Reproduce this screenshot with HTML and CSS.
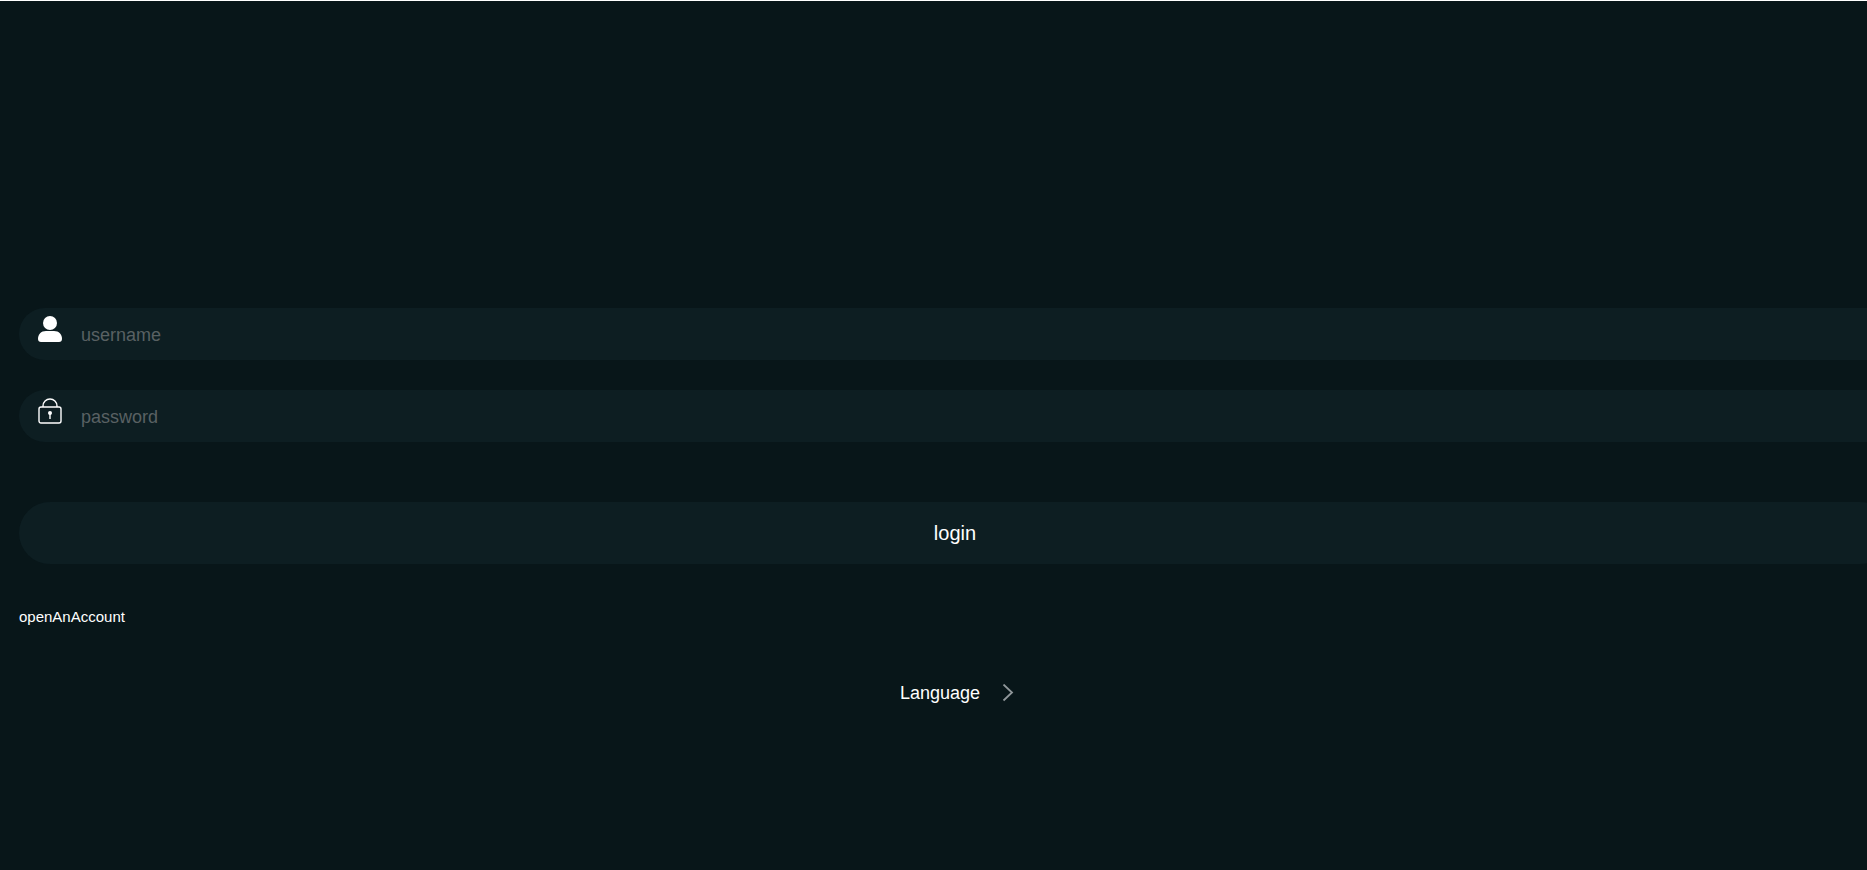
FILE: index.html
```html
<!DOCTYPE html>
<html lang="en">
<head>
    <meta charset="UTF-8">
    <meta name="viewport" content="width=device-width, initial-scale=1.0">
    <title>login</title>
    <link rel="stylesheet" href="styles.css">
</head>
<body>

    <main class="login-page">
        <form class="login-form">
            <div class="field">
                <label class="field-icon" for="username" aria-label="username">
                    <svg width="24" height="26" viewBox="0 0 24 26" fill="#fff">
                        <circle cx="12" cy="7" r="7"/>
                        <path d="M8 15h8c5 0 8 3.500 8 8 0 2-1.200 3-3 3H3c-1.800 0-3-1-3-3 0-4.500 3-8 8-8z"/>
                    </svg>
                </label>
                <input type="text" id="username" placeholder="username">
            </div>

            <div class="field">
                <label class="field-icon" for="password" aria-label="password">
                    <svg width="24" height="26" viewBox="0 0 24 26" fill="none" stroke="#fff" stroke-width="1.4">
                        <path d="M5 9V8a7 7 0 0 1 14 0v1"/>
                        <rect x="1" y="9" width="22" height="16" rx="2"/>
                        <circle cx="12" cy="15" r="2" fill="#fff" stroke="none"/>
                        <path d="M12 15v6"/>
                    </svg>
                </label>
                <input type="password" id="password" placeholder="password">
            </div>

            <button type="submit" class="login-button">login</button>
            <a class="account-link" href="#">openAnAccount</a>
        </form>

        <button type="button" class="language">
            <span>Language</span>
            <svg width="12" height="18" viewBox="0 0 12 18" fill="none" stroke="#90979a" stroke-width="1.8">
                <path d="M1.500 0.500l8.500 8-8.500 8"/>
            </svg>
        </button>
    </main>

</body>
</html>
```

FILE: styles.css
```css
* { margin: 0; padding: 0; box-sizing: border-box; }
body { background-color: #081619; color: #fff; font-family: Arial, "Liberation Sans", sans-serif; border-top: 1px solid #fff; overflow-x: hidden; }
input, button { font-family: inherit; color: #fff; border: none; outline: none; }
button { cursor: pointer; }

/* the form runs past the right edge of the window */
.login-page { display: flex; flex-direction: column; padding-top: 307px; margin-left: 19px; margin-right: -24px; }
.login-form { display: flex; flex-direction: column; }

.field { display: flex; height: 52px; padding: 0 19px; margin-bottom: 30px; background-color: #0d1e22; border-radius: 26px; }
.field-icon { display: block; height: 26px; margin-top: 8px; }
.field input { flex: 1; padding: 3px 0 0 19px; font-size: 18px; background: transparent; }
.field input::placeholder { color: #596163; }

.login-button { height: 62px; margin-top: 30px; font-size: 20px; background-color: #0d1e22; border-radius: 31px; }
.account-link { align-self: flex-start; margin-top: 43px; font-size: 15px; line-height: 20px; color: #fff; text-decoration: none; }

.language { display: flex; align-items: center; align-self: center; gap: 22px; padding-left: 4px; margin-top: 54px; font-size: 18px; line-height: 24px; background: transparent; }
```
